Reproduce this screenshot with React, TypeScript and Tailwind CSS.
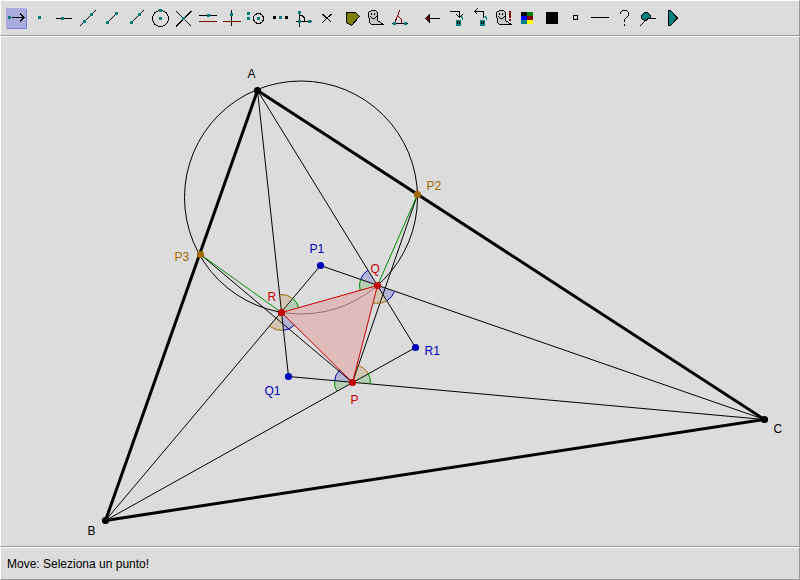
import { useState } from 'react'
import type { ReactNode } from 'react'
import clsx from 'clsx'

const TEAL = '#008080'
const MAROON = '#800000'

type Point = [number, number]

const points: Record<string, Point> = {
    A: [257, 90],
    B: [105, 520],
    C: [764, 419],
    P: [352, 382],
    Q: [377, 285],
    R: [281, 312],
    P1: [320, 265],
    Q1: [288, 376],
    R1: [415, 347],
    P2: [417, 194],
    P3: [200, 254],
}

const colors = {
    black: '#000000',
    red: '#c40000',
    blue: '#0000b8',
    green: '#008c00',
    brown: '#a06a00',
}

type Color = keyof typeof colors

const segments: [string, string, Color, number][] = [
    ['A', 'R1', 'black', 1],
    ['A', 'Q1', 'black', 1],
    ['B', 'P1', 'black', 1],
    ['B', 'R1', 'black', 1],
    ['C', 'P1', 'black', 1],
    ['C', 'Q1', 'black', 1],
    ['P3', 'P', 'black', 1],
    ['P2', 'P', 'black', 1],
    ['P3', 'R', 'green', 1],
    ['P2', 'Q', 'green', 1],
    ['A', 'B', 'black', 3],
    ['B', 'C', 'black', 3],
    ['C', 'A', 'black', 3],
]

// vertex, from, to (clockwise on screen)
const angles: [string, string, string, Color][] = [
    ['R', 'A', 'P1', 'brown'],
    ['R', 'P1', 'Q', 'green'],
    ['R', 'Q1', 'B', 'brown'],
    ['R', 'P', 'Q1', 'blue'],
    ['Q', 'P1', 'A', 'blue'],
    ['Q', 'R', 'P1', 'green'],
    ['Q', 'R1', 'P', 'brown'],
    ['Q', 'C', 'R1', 'blue'],
    ['P', 'Q', 'R1', 'brown'],
    ['P', 'R1', 'C', 'green'],
    ['P', 'Q1', 'R', 'blue'],
    ['P', 'B', 'Q1', 'green'],
]

const labels: [string, number, number, Color][] = [
    ['A', 247, 77, 'black'],
    ['B', 87, 534, 'black'],
    ['C', 773, 432, 'black'],
    ['P', 350, 403, 'red'],
    ['Q', 370, 272, 'red'],
    ['R', 267, 300, 'red'],
    ['P1', 309, 252, 'blue'],
    ['Q1', 264, 394, 'blue'],
    ['R1', 424, 354, 'blue'],
    ['P2', 426, 189, 'brown'],
    ['P3', 174, 260, 'brown'],
]

function onArc([vx, vy]: Point, [x, y]: Point, r: number): Point {
    const d = Math.hypot(x - vx, y - vy)
    return [vx + ((x - vx) * r) / d, vy + ((y - vy) * r) / d]
}

function Angle({ vertex, from, to, color }: { vertex: string; from: string; to: string; color: Color }) {
    const v = points[vertex]
    const a = onArc(v, points[from], 18)
    const b = onArc(v, points[to], 18)
    const arc = `${a[0]} ${a[1]} A18 18 0 0 1 ${b[0]} ${b[1]}`
    return (
        <g>
            <path d={`M${v[0]} ${v[1]} L${arc} Z`} fill={colors[color]} fillOpacity={0.18} />
            <path d={`M${arc}`} fill="none" stroke={colors[color]} />
        </g>
    )
}

function Construction() {
    return (
        <svg
            viewBox="0.5 36.5 798 509"
            className="block h-auto w-full font-['Liberation_Sans',Arial,sans-serif] text-xs"
            role="img"
            aria-label="Triangolo ABC"
        >
            <circle cx="300.5" cy="197" r="116.5" fill="none" stroke="#000" />
            {segments.map(([a, b, color, width]) => (
                <line
                    key={a + b}
                    x1={points[a][0]}
                    y1={points[a][1]}
                    x2={points[b][0]}
                    y2={points[b][1]}
                    stroke={colors[color]}
                    strokeWidth={width}
                />
            ))}
            {angles.map(([vertex, from, to, color]) => (
                <Angle key={vertex + from} vertex={vertex} from={from} to={to} color={color} />
            ))}
            <polygon
                points={[points.P, points.Q, points.R].join(' ')}
                fill="#e2aaaa"
                fillOpacity={0.66}
                stroke={colors.red}
            />
            {labels.map(([name, x, y, color]) => (
                <g key={name} fill={colors[color]}>
                    <circle cx={points[name][0]} cy={points[name][1]} r="3.6" />
                    <text x={x} y={y}>
                        {name}
                    </text>
                </g>
            ))}
        </svg>
    )
}

// 3x3 handle, x and y are its middle pixel
function Dot({ x, y, color = TEAL }: { x: number; y: number; color?: string }) {
    return <rect x={x - 1} y={y - 1} width="3" height="3" fill={color} stroke="none" />
}

function Ghost() {
    return (
        <>
            <path d="M7.5 4.5H11.5L13.5 6.5V14.5L16.5 16.5L19.5 18.5H7.5L5.5 16.5V12.5L4.5 11.5V6.5Z" fill="#c8c8c8" />
            <path d="M6.5 10.5L8.5 12.5H10.5L12.5 10.5M7.5 7V9M10.5 7V9" />
        </>
    )
}

function Bin() {
    return (
        <>
            <path d="M12 14H17V20H12Z" fill={TEAL} stroke="none" />
            <path d="M13.5 15V18M15.5 15V18" />
            <path d="M16.5 10.5L18.5 11.5V13.5L17.5 14.5" stroke={TEAL} />
        </>
    )
}

type Tool = { name: string; icon: ReactNode }

const constructionTools: Tool[] = [
    { name: 'Move', icon: <><path d="M8 11.5H20M16 7.5L20 11.5L16 15.5" /><Dot x={5} y={11} /></> },
    { name: 'Punto', icon: <Dot x={11} y={11} /> },
    { name: 'Punto su oggetto', icon: <><path d="M4 12.5H20" /><Dot x={10} y={12} /></> },
    { name: 'Retta', icon: <><path d="M4 20L20 4" /><Dot x={8} y={15} /><Dot x={15} y={8} /></> },
    { name: 'Segmento', icon: <><path d="M7 17L17 7" /><Dot x={7} y={16} /><Dot x={16} y={7} /></> },
    { name: 'Semiretta', icon: <><path d="M7 17L20 4" /><Dot x={7} y={16} /><Dot x={15} y={8} /></> },
    { name: 'Cerchio', icon: <><circle cx="12.5" cy="12.5" r="8" /><Dot x={12} y={4} /><Dot x={12} y={12} /></> },
    { name: 'Intersezione', icon: <><path d="M4 5L19.5 20.5M4 20.5L19.5 5" /><Dot x={11} y={12} /></> },
    { name: 'Parallela', icon: <><path d="M3 9.5H21" /><path d="M3 15.5H21" stroke={MAROON} /><Dot x={12} y={9} /></> },
    { name: 'Perpendicolare', icon: <><path d="M11.5 4V20" /><path d="M3 15.5H21" stroke={MAROON} /><Dot x={11} y={8} /></> },
    { name: 'Compasso', icon: <><circle cx="14.5" cy="12.5" r="5" /><Dot x={4} y={7} /><Dot x={4} y={12} /><Dot x={14} y={12} /></> },
    { name: 'Punto medio', icon: <><Dot x={6} y={11} color="#000" /><Dot x={12} y={11} /><Dot x={18} y={11} color="#000" /></> },
    {
        name: 'Angolo fisso',
        icon: (
            <>
                <path d="M7.5 6V21M4 15.5H19.5M8 9.5H10L12.5 12V15" />
                <Dot x={7} y={6} />
                <Dot x={7} y={15} />
                <Dot x={17} y={15} />
            </>
        ),
    },
    { name: 'Nascondi', icon: <path d="M6.5 8L15.5 16.5M6.5 16.5L15.5 8" /> },
    { name: 'Poligono', icon: <path d="M6.5 6.5H15.5L19.5 10.5L11.5 19.5L6.5 16.5Z" fill="#808000" /> },
    { name: 'Oggetti nascosti', icon: <Ghost /> },
    {
        name: 'Angolo',
        icon: (
            <>
                <path d="M4 17.5H20" />
                <path d="M6.5 17L12 4M8.5 10.5H10.5L13.5 13.5V17" stroke={MAROON} />
                <Dot x={6} y={17} />
                <Dot x={17} y={17} />
            </>
        ),
    },
]

const editTools: Tool[] = [
    { name: 'Indietro', icon: <><path d="M10 12.5H20" /><path d="M5.5 12.5L9.5 8.5V16.5Z" fill={MAROON} /></> },
    { name: 'Elimina', icon: <><Bin /><path d="M6 5.5H15.5V12M12.5 8.5L15.5 11.5L18.5 8.5" /></> },
    { name: 'Ripristina', icon: <><Bin /><path d="M15.5 12V5.5H6M9.5 2.5L6.5 5.5L9.5 8.5" /></> },
    {
        name: 'Mostra nascosti',
        icon: (
            <>
                <Ghost />
                <path d="M17 5H19V12H17ZM17 13H19V15H17Z" fill={MAROON} stroke="none" />
            </>
        ),
    },
    {
        name: 'Colore',
        icon: (
            <g stroke="none">
                <rect x="5" y="6" width="6" height="4" fill="#000" />
                <rect x="11" y="6" width="6" height="4" fill="#008000" />
                <rect x="5" y="10" width="6" height="4" fill="#0000ff" />
                <rect x="11" y="10" width="6" height="4" fill={MAROON} />
                <rect x="5" y="14" width="6" height="4" fill={TEAL} />
                <rect x="11" y="14" width="6" height="4" fill="#ffff00" />
            </g>
        ),
    },
    { name: 'Colore nero', icon: <rect x="6" y="6" width="12" height="12" fill="#000" stroke="none" /> },
    { name: 'Tipo di punto', icon: <rect x="9.5" y="9.5" width="4" height="4" /> },
    { name: 'Spessore', icon: <path d="M3 11.5H21" /> },
    { name: 'Aiuto', icon: <path d="M8.5 8V6.5L10.5 4.5H14.5L16.5 6.5V9.5L12.5 13.5V16M12.5 18V20" /> },
    {
        name: 'Puntina',
        icon: (
            <>
                <path d="M4 20L10 14" />
                <path d="M8.5 6.5H11.5L14.5 9.5V12.5H11.5L10.5 14.5H8.5L5.5 12.5V9.5Z" fill={TEAL} />
                <path d="M11 12.5H20" />
            </>
        ),
    },
    { name: 'Riproduci', icon: <path d="M8.5 4.5H10.5L17.5 12L10.5 19.5H8.5Z" fill={TEAL} /> },
]

function ToolButton({ tool, active, onClick }: { tool: Tool; active: boolean; onClick: () => void }) {
    return (
        <button type="button" aria-label={tool.name} aria-pressed={active} onClick={onClick} className="size-6 p-0.5">
            <span className={clsx('block size-5', active && 'bg-[#aaaadd] shadow-[1px_1px_0_#7777dd]')}>
                <svg
                    viewBox="2 2 20 20"
                    className="block size-5 overflow-visible"
                    fill="none"
                    stroke="#000"
                    shapeRendering="crispEdges"
                >
                    {tool.icon}
                </svg>
            </span>
        </button>
    )
}

const panel = 'border border-t-white border-l-white border-r-[#999] border-b-[#999]'

export default function App() {
    const [current, setCurrent] = useState('Move')

    const renderTools = (tools: Tool[]) =>
        tools.map((tool) => (
            <ToolButton
                key={tool.name}
                tool={tool}
                active={tool.name === current}
                onClick={() => setCurrent(tool.name)}
            />
        ))

    return (
        <div className="flex min-h-screen flex-col bg-[#dcdcdc] font-['Liberation_Sans',Arial,sans-serif] text-xs text-black">
            <header className={clsx(panel, 'flex flex-wrap gap-x-2 px-[3px] py-[5px]')}>
                <div className="flex flex-wrap">{renderTools(constructionTools)}</div>
                <div className="flex flex-wrap">{renderTools(editTools)}</div>
            </header>
            <main className={clsx(panel, 'flex-1')}>
                <Construction />
            </main>
            <footer className={clsx(panel, 'px-1.5 pt-2 pb-1.5 leading-[17px]')}>{current}: Seleziona un punto!</footer>
        </div>
    )
}
